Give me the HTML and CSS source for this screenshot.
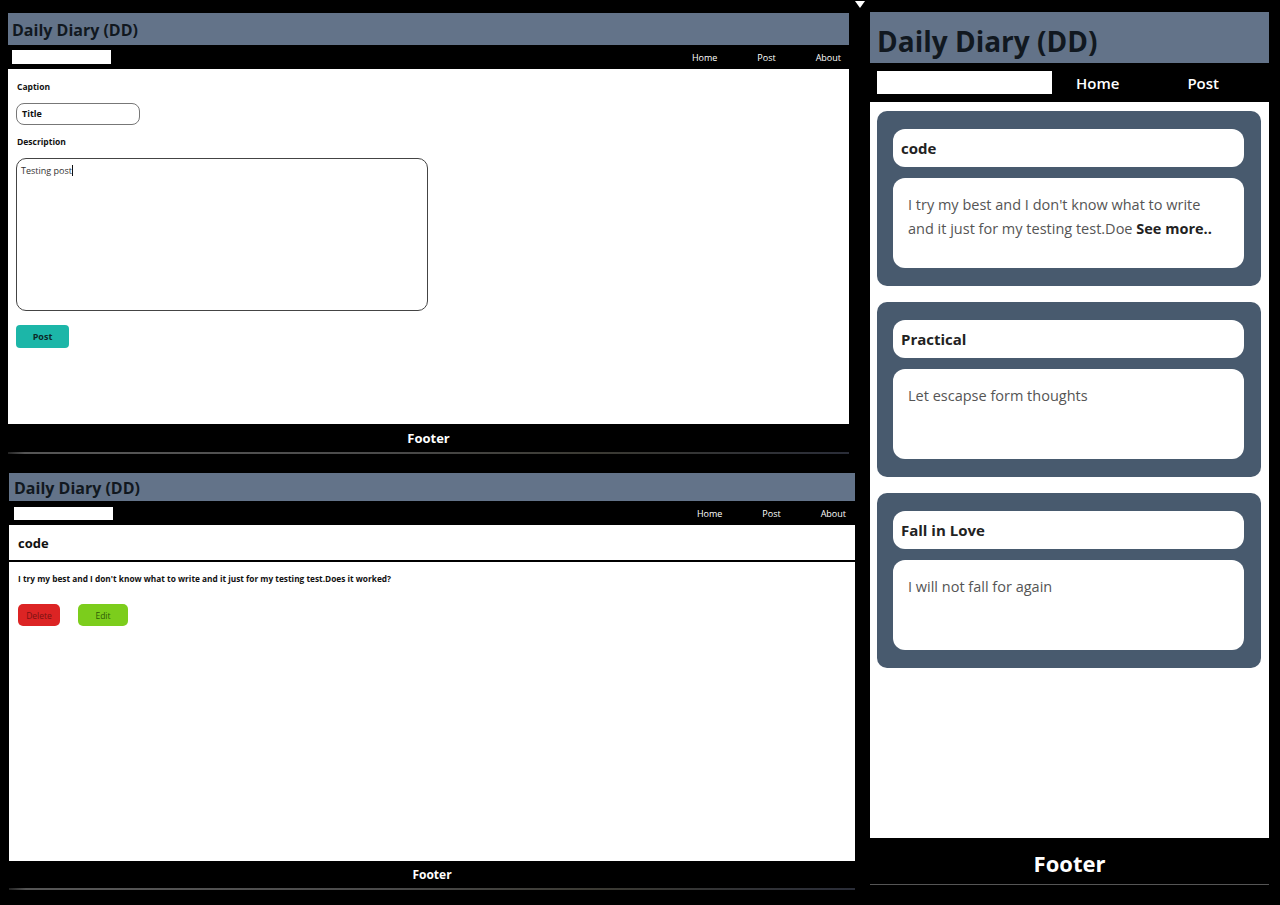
FILE: index.html
```html
<!DOCTYPE html>
<html lang="en">
<head>
<meta charset="utf-8">
<title>Daily Diary (DD)</title>
<link rel="stylesheet" href="styles.css">
</head>
<body>
<div class="collage">
  <div class="left-col">
    <section class="shot shot-post">
      <header class="brand">Daily Diary (DD)</header>
      <nav class="nav">
        <input class="search" type="text" aria-label="search">
        <ul class="links">
          <li>Home</li>
          <li>Post</li>
          <li>About</li>
        </ul>
      </nav>
      <main class="content form-content">
        <label class="lbl">Caption</label>
        <div class="title-input">Title</div>
        <label class="lbl">Description</label>
        <div class="textarea">Testing post<span class="caret"></span></div>
        <button class="btn-post">Post</button>
      </main>
      <footer class="foot">Footer</footer>
      <div class="scrollline"></div>
    </section>

    <section class="shot shot-view">
      <header class="brand">Daily Diary (DD)</header>
      <nav class="nav">
        <input class="search" type="text" aria-label="search">
        <ul class="links">
          <li>Home</li>
          <li>Post</li>
          <li>About</li>
        </ul>
      </nav>
      <main class="content view-content">
        <h2 class="view-title">code</h2>
        <p class="view-body">I try my best and I don't know what to write and it just for my testing test.Does it worked?</p>
        <div class="actions">
          <button class="btn-delete">Delete</button>
          <button class="btn-edit">Edit</button>
        </div>
      </main>
      <footer class="foot">Footer</footer>
      <div class="scrollline"></div>
    </section>
  </div>

  <section class="shot shot-mobile">
    <header class="brand">Daily Diary (DD)</header>
    <nav class="nav">
      <input class="search" type="text" aria-label="search">
      <ul class="links">
        <li>Home</li>
        <li>Post</li>
      </ul>
    </nav>
    <main class="content cards">
      <article class="card">
        <div class="card-title">code</div>
        <div class="card-body"><span class="line">I try my best and I don't know what to write</span> <span class="line">and it just for my testing test.Doe</span> <b>See more..</b></div>
      </article>
      <article class="card">
        <div class="card-title">Practical</div>
        <div class="card-body">Let escapse form thoughts</div>
      </article>
      <article class="card">
        <div class="card-title">Fall in Love</div>
        <div class="card-body">I will not fall for again</div>
      </article>
    </main>
    <footer class="foot">Footer</footer>
  </section>
</div>
<span class="cursor-mark"></span>
</body>
</html>
```

FILE: styles.css
```css
* { box-sizing: border-box; }
html, body { margin: 0; padding: 0; }
body {
  background: #000;
  width: 1280px;
  height: 905px;
  overflow: hidden;
  font-family: "Open Sans", "Noto Sans", sans-serif;
  color: #111;
  position: relative;
}
.collage {
  display: flex;
  align-items: flex-start;
}
.left-col {
  display: flex;
  flex-direction: column;
  padding-left: 8px;
  padding-top: 13px;
  width: 862px;
}
.shot { display: flex; flex-direction: column; }

.brand {
  background: #637389;
  font-weight: 700;
  color: #111820;
}
.nav {
  background: #000;
  display: flex;
  align-items: center;
  justify-content: space-between;
}
.search {
  border: 0;
  background: #fff;
  padding: 0;
  margin: 0;
  outline: none;
}
.links {
  list-style: none;
  margin: 0;
  padding: 0;
  display: flex;
  color: #fff;
}
.content { background: #fff; }
.foot {
  background: #000;
  color: #fff;
  font-weight: 700;
  text-align: center;
}
.scrollline {
  height: 2px;
  background: linear-gradient(90deg, #222 0, #555 2%, #555 12%, #4a4a4a 45%, #3b3a33 70%, #2a2d38 100%);
}

/* Shot 1 : post form */
.shot-post { width: 841px; }
.shot-post .brand {
  height: 32px;
  font-size: 16px;
  line-height: 34px;
  padding-left: 4px;
}
.shot-post .nav { height: 24px; padding: 0 8px 0 4px; }
.shot-post .search { width: 99px; height: 14px; }
.shot-post .links, .shot-view .links { font-size: 9px; gap: 40px; }
.form-content {
  height: 355px;
  padding: 12px 8px 0 8px;
  display: flex;
  flex-direction: column;
  align-items: flex-start;
}
.lbl {
  font-size: 8.5px;
  font-weight: 700;
  margin-left: 1px;
  line-height: 12px;
}
.title-input {
  margin-top: 10px;
  width: 124px;
  height: 22px;
  border: 1px solid #777;
  border-radius: 8px;
  font-size: 9px;
  font-weight: 700;
  line-height: 20px;
  padding-left: 5px;
  margin-bottom: 11px;
}
.textarea {
  margin-top: 10px;
  width: 412px;
  height: 153px;
  border: 1.5px solid #444;
  border-radius: 10px;
  font-size: 9px;
  padding: 5px 4px;
  color: #333;
}
.caret {
  display: inline-block;
  width: 1px;
  height: 11px;
  background: #111;
  vertical-align: -2px;
}
.btn-post {
  margin-top: 14px;
  width: 53px;
  height: 23px;
  border: 0;
  border-radius: 4px;
  background: #1cb6a8;
  color: #0c2a28;
  font-family: inherit;
  font-size: 9px;
  font-weight: 700;
  padding: 0;
}
.shot-post .foot { height: 28px; font-size: 13px; line-height: 29px; }

/* Shot 2 : view post */
.shot-view { width: 846px; margin-top: 19px; margin-left: 1px; }
.shot-view .brand {
  height: 28px;
  font-size: 16px;
  line-height: 30px;
  padding-left: 5px;
}
.shot-view .nav { height: 24px; padding: 0 9px 0 5px; }
.shot-view .search { width: 99px; height: 13px; }
.view-content { height: 336px; }
.view-title {
  margin: 0;
  font-size: 13px;
  font-weight: 700;
  height: 37px;
  line-height: 36px;
  padding-left: 9px;
  border-bottom: 2px solid #000;
}
.view-body {
  margin: 0;
  padding: 11px 9px 0;
  font-size: 8.3px;
  font-weight: 700;
}
.actions {
  display: flex;
  gap: 18px;
  padding: 20px 9px 0;
}
.btn-delete, .btn-edit {
  height: 22px;
  border: 0;
  border-radius: 5px;
  font-family: inherit;
  font-size: 8.5px;
  padding: 0;
}
.btn-delete { width: 42px; background: #dc2424; color: #7a1212; }
.btn-edit { width: 50px; background: #7ccd1c; color: #2e5a06; }
.shot-view .foot { height: 27px; font-size: 12px; line-height: 28px; }

/* Shot 3 : mobile */
.shot-mobile {
  width: 399px;
  margin-left: 8px;
  margin-top: 12px;
}
.shot-mobile .brand {
  height: 51px;
  font-size: 28px;
  line-height: 58px;
  padding-left: 7px;
}
.shot-mobile .nav {
  height: 39px;
  justify-content: flex-start;
  padding-left: 7px;
}
.shot-mobile .search { width: 175px; height: 23px; }
.shot-mobile .links {
  font-size: 15px;
  gap: 68px;
  margin-left: 24px;
  font-weight: 600;
}
.cards {
  height: 736px;
  padding: 9px 8px 0 7px;
  display: flex;
  flex-direction: column;
  gap: 16px;
}
.card {
  background: #485a6e;
  border-radius: 10px;
  padding: 18px 17px 18px 16px;
  display: flex;
  flex-direction: column;
  gap: 11px;
}
.card-title {
  background: #fff;
  border-radius: 12px;
  height: 38px;
  line-height: 38px;
  padding-left: 8px;
  font-size: 15px;
  font-weight: 700;
  color: #222;
}
.card-body {
  background: #fff;
  border-radius: 12px;
  height: 90px;
  padding: 15px 24px 0 15px;
  font-size: 14.5px;
  line-height: 24px;
  color: #555;
}
.card-body .line { white-space: nowrap; }
.card-body b { color: #222; }
.shot-mobile .foot {
  height: 47px;
  font-size: 22px;
  line-height: 50px;
  border-bottom: 1px solid #555;
}
.cursor-mark {
  position: absolute;
  left: 855px;
  top: 1px;
  width: 0;
  height: 0;
  border-left: 5px solid transparent;
  border-right: 5px solid transparent;
  border-top: 7px solid #fff;
}
```
